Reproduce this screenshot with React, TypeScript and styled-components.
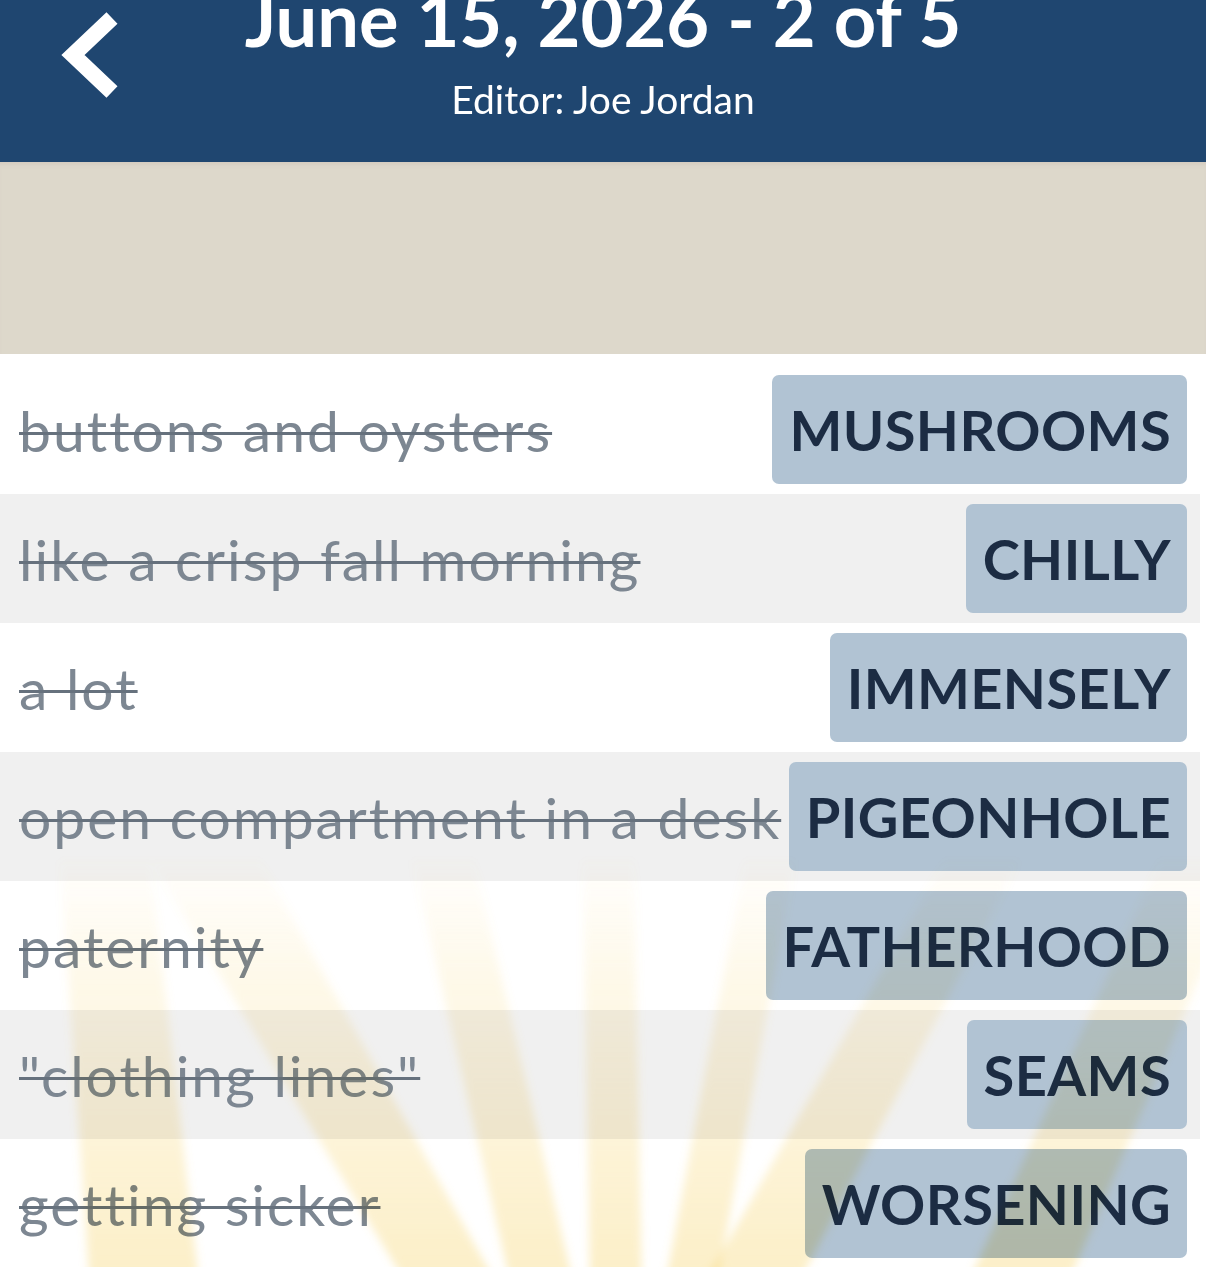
import React from "react";
import styled, { createGlobalStyle } from "styled-components";

const Global = createGlobalStyle`
  html, body { margin: 0; padding: 0; background: #ffffff; }
  body { font-family: Lato, "Noto Sans", sans-serif; overflow: hidden; }
`;

const Page = styled.div`
  width: 1206px;
  height: 1267px;
  overflow: hidden;
  background: #ffffff;
`;

const Header = styled.header`
  height: 162px;
  background: #1f4670;
  color: #ffffff;
  display: grid;
  grid-template-columns: 1fr auto 1fr;
  grid-template-rows: auto auto;
  align-content: start;
`;

const BackButton = styled.button`
  grid-column: 1;
  grid-row: 1 / 3;
  justify-self: start;
  align-self: start;
  margin: 12px 0 0 58px;
  padding: 0;
  border: 0;
  background: transparent;
  width: 66px;
  height: 88px;
  display: flex;
  cursor: pointer;
`;

const Title = styled.h1`
  grid-column: 2;
  grid-row: 1;
  margin: -18px 0 0;
  font-size: 74px;
  line-height: 74px;
  font-weight: 700;
  white-space: nowrap;
  text-align: center;
`;

const Subtitle = styled.div`
  grid-column: 2;
  grid-row: 2;
  margin-top: 23px;
  font-size: 39px;
  line-height: 40px;
  font-weight: 400;
  text-align: center;
`;

const Banner = styled.div`
  height: 192px;
  background: #ddd8cb;
  box-shadow: inset 0 5px 4px -3px rgba(210, 200, 190, 0.9);
`;

const ListArea = styled.div`
  position: relative;
  width: 1200px;
  padding-top: 11px;
  display: flex;
  flex-direction: column;
`;

const Row = styled.div<{ $shaded: boolean }>`
  height: 129px;
  box-sizing: border-box;
  padding: 10px 13px 10px 19px;
  display: flex;
  align-items: center;
  justify-content: space-between;
  background: ${(p) => (p.$shaded ? "#f0f0f0" : "#ffffff")};
`;

const Clue = styled.span`
  font-size: 57px;
  letter-spacing: 2px;
  color: #7d8792;
  text-decoration: line-through;
  text-decoration-color: #66717d;
  text-decoration-thickness: 3px;
  white-space: nowrap;
`;

const Answer = styled.div`
  height: 109px;
  box-sizing: border-box;
  padding: 0 16px 0 17px;
  display: flex;
  align-items: center;
  background: #b1c3d3;
  border-radius: 7px;
  color: #1c2c43;
  font-size: 56px;
  font-weight: 700;
  letter-spacing: 0.4px;
  white-space: nowrap;
`;

const Rays = styled.svg`
  position: absolute;
  inset: 0;
  width: 100%;
  height: 100%;
  pointer-events: none;
  mix-blend-mode: multiply;
`;

const items = [
  { clue: "buttons and oysters", answer: "MUSHROOMS" },
  { clue: "like a crisp fall morning", answer: "CHILLY" },
  { clue: "a lot", answer: "IMMENSELY" },
  { clue: "open compartment in a desk", answer: "PIGEONHOLE" },
  { clue: "paternity", answer: "FATHERHOOD" },
  { clue: "\"clothing lines\"", answer: "SEAMS" },
  { clue: "getting sicker", answer: "WORSENING" },
];

// rays: x-range at y=860 (top) and at y=1267 (bottom)
const rays: [number, number, number, number][] = [
  [60, 150, 90, 200],
  [150, 260, 410, 500],
  [412, 474, 512, 575],
  [583, 634, 590, 642],
  [745, 795, 664, 716],
  [945, 1020, 700, 795],
  [1160, 1250, 965, 1065],
];

export default function App() {
  return (
    <Page>
      <Global />
      <Header>
        <BackButton aria-label="Back">
          <svg width="66" height="88" viewBox="0 0 66 88">
            <polyline
              points="54,6 15,43 54,80"
              fill="none"
              stroke="#ffffff"
              strokeWidth="16"
              strokeLinecap="butt"
              strokeLinejoin="miter"
            />
          </svg>
        </BackButton>
        <Title>June 15, 2026 - 2 of 5</Title>
        <Subtitle>Editor: Joe Jordan</Subtitle>
      </Header>
      <Banner />
      <ListArea>
        {items.map((it, i) => (
          <Row key={it.answer} $shaded={i % 2 === 1}>
            <Clue>{it.clue}</Clue>
            <Answer>{it.answer}</Answer>
          </Row>
        ))}
        <Rays viewBox="0 354 1200 914" preserveAspectRatio="none">
          <defs>
            <linearGradient id="rayFade" x1="0" y1="850" x2="0" y2="1267" gradientUnits="userSpaceOnUse">
              <stop offset="0" stopColor="#f7d36a" stopOpacity="0" />
              <stop offset="0.3" stopColor="#f7d36a" stopOpacity="0.14" />
              <stop offset="1" stopColor="#f7d36a" stopOpacity="0.36" />
            </linearGradient>
            <filter id="raySoft" x="-10%" y="-10%" width="120%" height="120%">
              <feGaussianBlur stdDeviation="4" />
            </filter>
          </defs>
          <g filter="url(#raySoft)">
            {rays.map(([a, b, c, d], i) => (
              <polygon key={i} points={`${a},860 ${b},860 ${d},1290 ${c},1290`} fill="url(#rayFade)" />
            ))}
          </g>
        </Rays>
      </ListArea>
    </Page>
  );
}
